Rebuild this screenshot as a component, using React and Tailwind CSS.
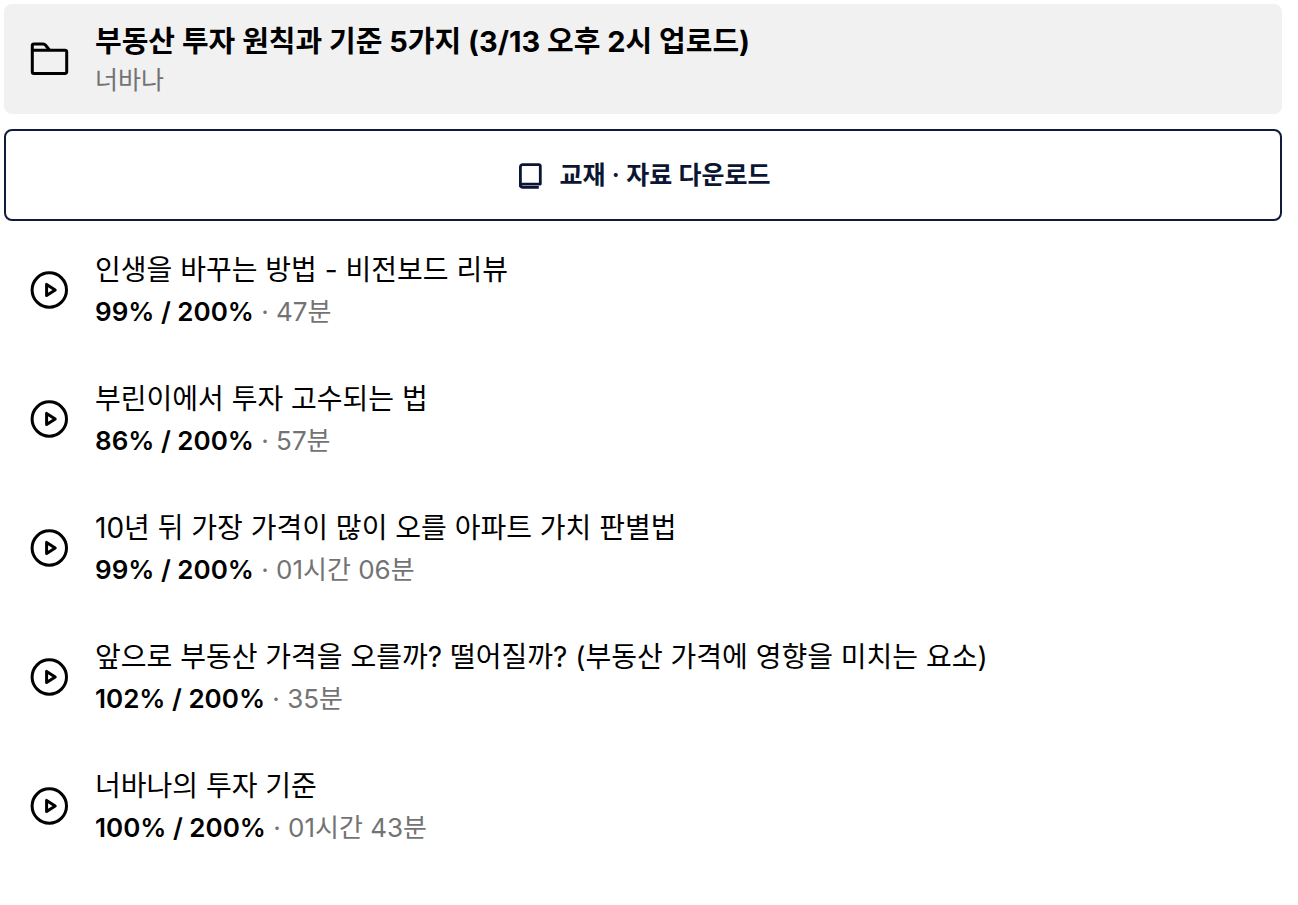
import React from 'react';

const lessons = [
  { id: 1, title: '인생을 바꾸는 방법 - 비전보드 리뷰', progress: '99% / 200%', duration: '47분' },
  { id: 2, title: '부린이에서 투자 고수되는 법', progress: '86% / 200%', duration: '57분' },
  { id: 3, title: '10년 뒤 가장 가격이 많이 오를 아파트 가치 판별법', progress: '99% / 200%', duration: '01시간 06분' },
  { id: 4, title: '앞으로 부동산 가격을 오를까? 떨어질까? (부동산 가격에 영향을 미치는 요소)', progress: '102% / 200%', duration: '35분' },
  { id: 5, title: '너바나의 투자 기준', progress: '100% / 200%', duration: '01시간 43분' },
];

function FolderIcon() {
  return (
    <svg viewBox="0 0 40 40" className="w-10 h-10 shrink-0" fill="none" stroke="currentColor" strokeWidth="3" strokeLinejoin="round" aria-hidden="true">
      <path d="M3.3 11.2V6.5a1.5 1.5 0 0 1 1.5-1.5h9.4a3 3 0 0 1 2.2 1L20.6 11.2" />
      <path d="M3.3 11.2h32.9a1.5 1.5 0 0 1 1.5 1.5v20.3a1.5 1.5 0 0 1-1.5 1.5H4.8a1.5 1.5 0 0 1-1.5-1.5z" />
    </svg>
  );
}

function PlayIcon() {
  return (
    <svg viewBox="0 0 40 40" className="w-10 h-10 shrink-0" fill="none" stroke="currentColor" strokeWidth="3" strokeLinejoin="round" aria-hidden="true">
      <circle cx="20.3" cy="20" r="17.2" />
      <path d="M17.6 14.4v11.2l8.6-5.6z" />
    </svg>
  );
}

function BookIcon() {
  return (
    <svg viewBox="0 0 28 28" className="w-7 h-7 shrink-0" fill="none" stroke="currentColor" strokeWidth="2.8" strokeLinejoin="round" aria-hidden="true">
      <path d="M4.4 24V5a2.4 2.4 0 0 1 2.4-2.4h16a1.5 1.5 0 0 1 1.5 1.5v18H6.8a2.4 2.4 0 0 0-2.4 1.9z" />
      <path d="M4.4 22.8a2.4 2.4 0 0 0 2.4 2.6h16" />
    </svg>
  );
}

export default function App() {
  return (
    <main className="pl-1 pr-4 pt-1 bg-white text-black font-['Inter','Noto_Sans_CJK_KR',sans-serif]">
      {/* 강의 챕터 헤더 */}
      <header className="flex items-center gap-[26px] h-[110px] px-[25px] rounded-lg bg-[#f1f1f1]">
        <FolderIcon />
        <div className="min-w-0 pt-0.5">
          <h1 className="text-[29px] leading-10 font-bold">부동산 투자 원칙과 기준 5가지 (3/13 오후 2시 업로드)</h1>
          <p className="text-[25px] leading-9 text-[#737373]">너바나</p>
        </div>
      </header>

      <button type="button" className="mt-[15px] pt-0.5 w-full h-[92px] flex items-center justify-center gap-4 rounded-lg border-2 border-[#0f1a3c] text-[#0b1633] text-[25px] font-semibold">
        <BookIcon />
        교재 · 자료 다운로드
      </button>

      {/* 강의 목록 */}
      <ul className="mt-1">
        {lessons.map((lesson) => (
          <li key={lesson.id}>
            <a href={`#lesson-${lesson.id}`} className="flex items-center gap-[26px] h-[129px] px-[25px]">
              <PlayIcon />
              <div className="min-w-0 pt-0.5">
                <h2 className="text-[28px] leading-[42px]">{lesson.title}</h2>
                <p className="text-[26px] leading-[42px] text-[#737373]">
                  <span className="font-semibold text-black">{lesson.progress}</span> · {lesson.duration}
                </p>
              </div>
            </a>
          </li>
        ))}
      </ul>
    </main>
  );
}
